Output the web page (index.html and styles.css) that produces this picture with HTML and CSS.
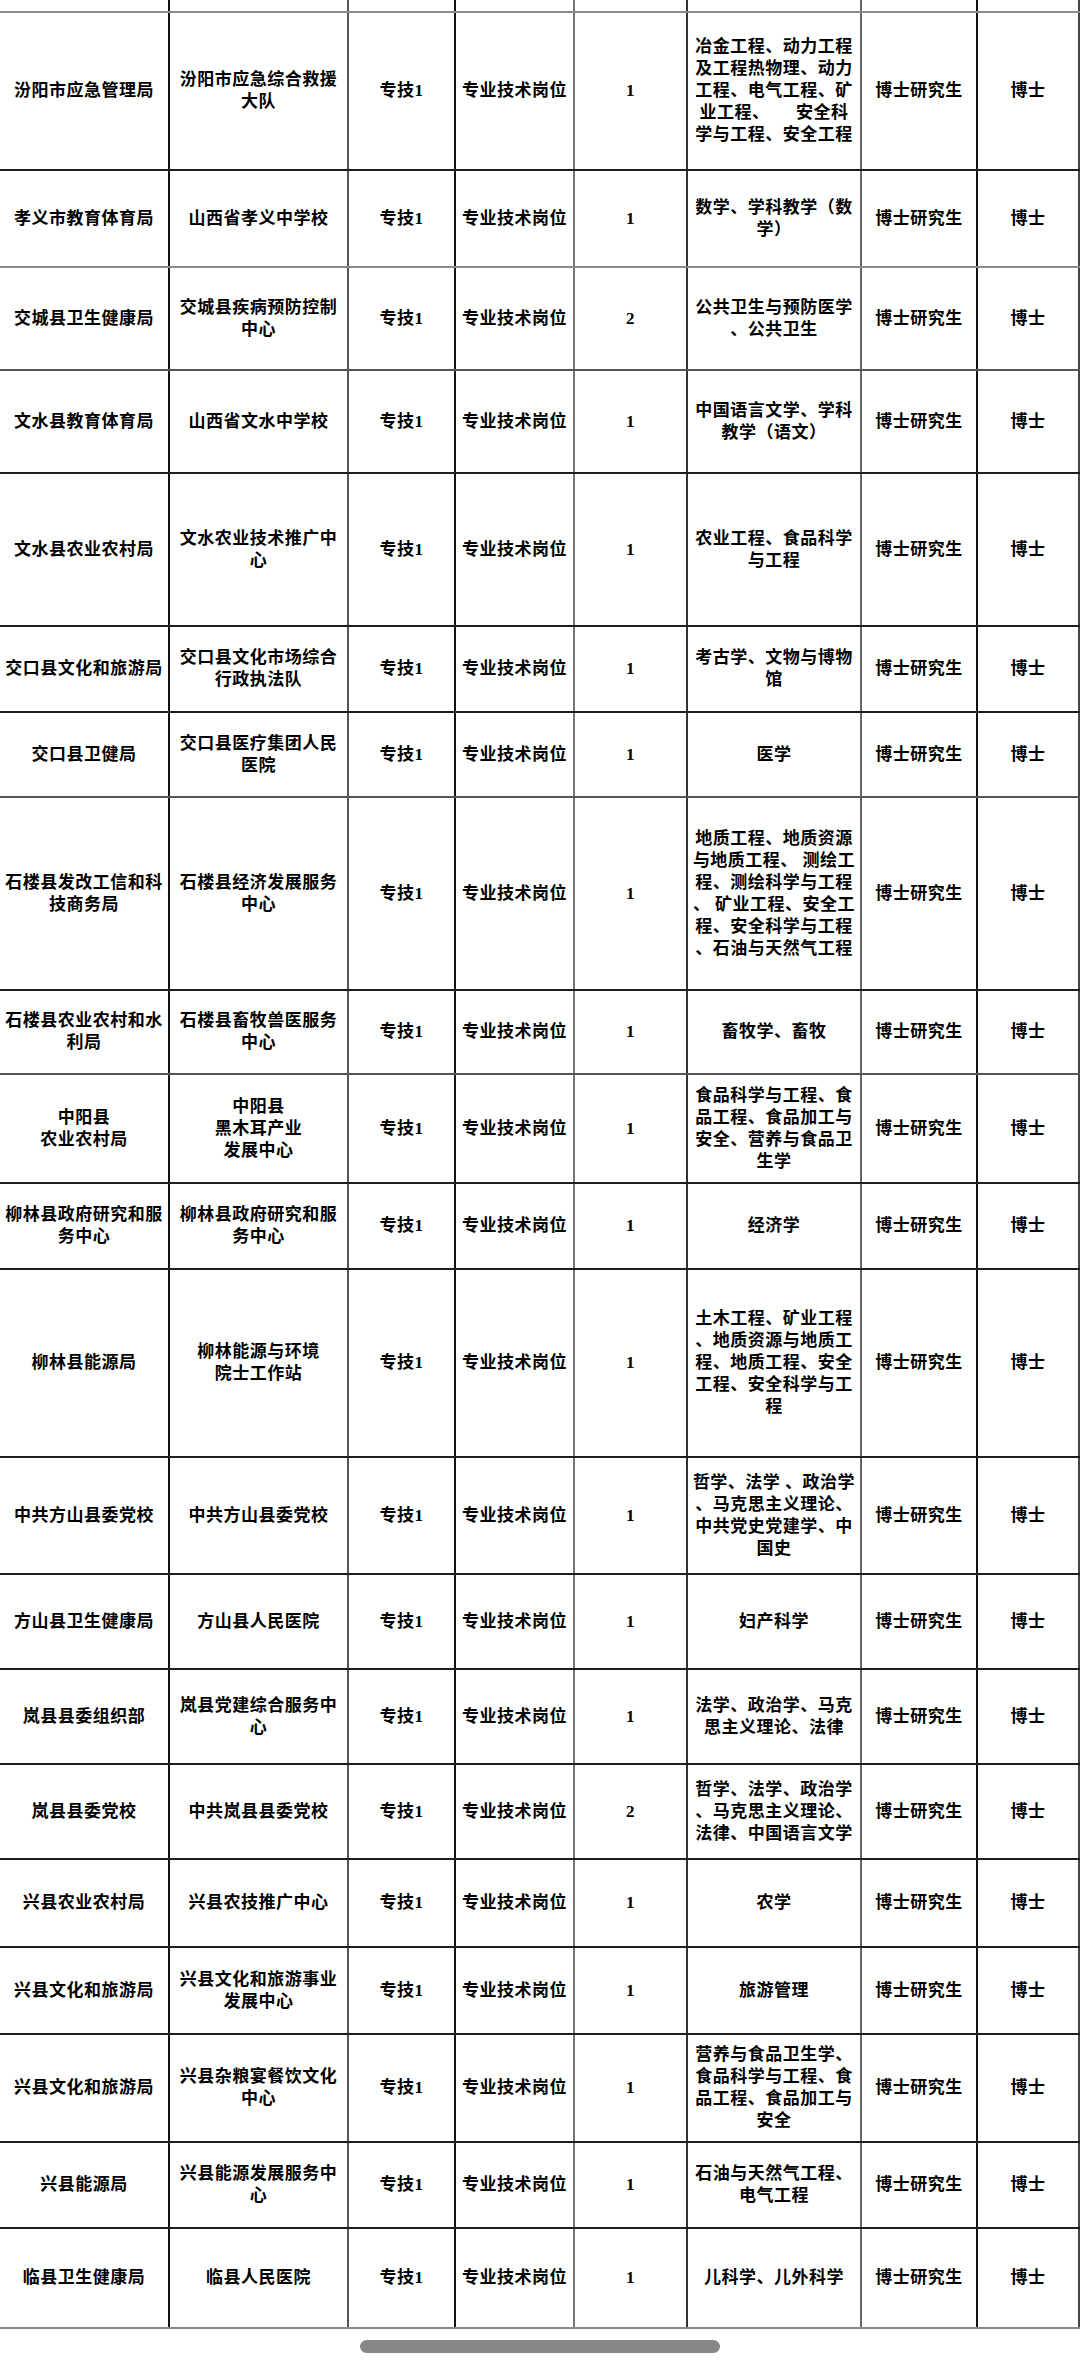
FILE: index.html
```html
<!DOCTYPE html>
<html lang="zh-CN">
<head>
<meta charset="utf-8">
<title>岗位表</title>
<link rel="stylesheet" href="styles.css">
</head>
<body>
<div class="sheet">
  <div class="row h13 soft">
    <div class="cell"></div><div class="cell"></div><div class="cell"></div><div class="cell"></div><div class="cell"></div><div class="cell"></div><div class="cell"></div><div class="cell"></div>
  </div>
  <div class="row h158">
    <div class="cell">汾阳市应急管理局</div><div class="cell">汾阳市应急综合救援<br>大队</div><div class="cell">专技1</div><div class="cell">专业技术岗位</div><div class="cell">1</div><div class="cell">冶金工程、动力工程<br>及工程热物理、动力<br>工程、电气工程、矿<br>业工程、　　安全科<br>学与工程、安全工程</div><div class="cell">博士研究生</div><div class="cell">博士</div>
  </div>
  <div class="row h97 soft">
    <div class="cell">孝义市教育体育局</div><div class="cell">山西省孝义中学校</div><div class="cell">专技1</div><div class="cell">专业技术岗位</div><div class="cell">1</div><div class="cell">数学、学科教学（数<br>学）</div><div class="cell">博士研究生</div><div class="cell">博士</div>
  </div>
  <div class="row h103 mid">
    <div class="cell">交城县卫生健康局</div><div class="cell">交城县疾病预防控制<br>中心</div><div class="cell">专技1</div><div class="cell">专业技术岗位</div><div class="cell">2</div><div class="cell">公共卫生与预防医学<br>、公共卫生</div><div class="cell">博士研究生</div><div class="cell">博士</div>
  </div>
  <div class="row h103">
    <div class="cell">文水县教育体育局</div><div class="cell">山西省文水中学校</div><div class="cell">专技1</div><div class="cell">专业技术岗位</div><div class="cell">1</div><div class="cell">中国语言文学、学科<br>教学（语文）</div><div class="cell">博士研究生</div><div class="cell">博士</div>
  </div>
  <div class="row h153">
    <div class="cell">文水县农业农村局</div><div class="cell">文水农业技术推广中<br>心</div><div class="cell">专技1</div><div class="cell">专业技术岗位</div><div class="cell">1</div><div class="cell">农业工程、食品科学<br>与工程</div><div class="cell">博士研究生</div><div class="cell">博士</div>
  </div>
  <div class="row h86">
    <div class="cell">交口县文化和旅游局</div><div class="cell">交口县文化市场综合<br>行政执法队</div><div class="cell">专技1</div><div class="cell">专业技术岗位</div><div class="cell">1</div><div class="cell">考古学、文物与博物<br>馆</div><div class="cell">博士研究生</div><div class="cell">博士</div>
  </div>
  <div class="row h85 mid">
    <div class="cell">交口县卫健局</div><div class="cell">交口县医疗集团人民<br>医院</div><div class="cell">专技1</div><div class="cell">专业技术岗位</div><div class="cell">1</div><div class="cell">医学</div><div class="cell">博士研究生</div><div class="cell">博士</div>
  </div>
  <div class="row h193">
    <div class="cell">石楼县发改工信和科<br>技商务局</div><div class="cell">石楼县经济发展服务<br>中心</div><div class="cell">专技1</div><div class="cell">专业技术岗位</div><div class="cell">1</div><div class="cell">地质工程、地质资源<br>与地质工程、 测绘工<br>程、测绘科学与工程<br>、 矿业工程、安全工<br>程、安全科学与工程<br>、石油与天然气工程</div><div class="cell">博士研究生</div><div class="cell">博士</div>
  </div>
  <div class="row h84 mid">
    <div class="cell">石楼县农业农村和水<br>利局</div><div class="cell">石楼县畜牧兽医服务<br>中心</div><div class="cell">专技1</div><div class="cell">专业技术岗位</div><div class="cell">1</div><div class="cell">畜牧学、畜牧</div><div class="cell">博士研究生</div><div class="cell">博士</div>
  </div>
  <div class="row h109">
    <div class="cell">中阳县<br>农业农村局</div><div class="cell">中阳县<br>黑木耳产业<br>发展中心</div><div class="cell">专技1</div><div class="cell">专业技术岗位</div><div class="cell">1</div><div class="cell">食品科学与工程、食<br>品工程、食品加工与<br>安全、营养与食品卫<br>生学</div><div class="cell">博士研究生</div><div class="cell">博士</div>
  </div>
  <div class="row h86">
    <div class="cell">柳林县政府研究和服<br>务中心</div><div class="cell">柳林县政府研究和服<br>务中心</div><div class="cell">专技1</div><div class="cell">专业技术岗位</div><div class="cell">1</div><div class="cell">经济学</div><div class="cell">博士研究生</div><div class="cell">博士</div>
  </div>
  <div class="row h188">
    <div class="cell">柳林县能源局</div><div class="cell">柳林能源与环境<br>院士工作站</div><div class="cell">专技1</div><div class="cell">专业技术岗位</div><div class="cell">1</div><div class="cell">土木工程、矿业工程<br>、地质资源与地质工<br>程、地质工程、安全<br>工程、安全科学与工<br>程</div><div class="cell">博士研究生</div><div class="cell">博士</div>
  </div>
  <div class="row h117">
    <div class="cell">中共方山县委党校</div><div class="cell">中共方山县委党校</div><div class="cell">专技1</div><div class="cell">专业技术岗位</div><div class="cell">1</div><div class="cell">哲学、法学 、政治学<br>、马克思主义理论、<br>中共党史党建学、中<br>国史</div><div class="cell">博士研究生</div><div class="cell">博士</div>
  </div>
  <div class="row h95">
    <div class="cell">方山县卫生健康局</div><div class="cell">方山县人民医院</div><div class="cell">专技1</div><div class="cell">专业技术岗位</div><div class="cell">1</div><div class="cell">妇产科学</div><div class="cell">博士研究生</div><div class="cell">博士</div>
  </div>
  <div class="row h95">
    <div class="cell">岚县县委组织部</div><div class="cell">岚县党建综合服务中<br>心</div><div class="cell">专技1</div><div class="cell">专业技术岗位</div><div class="cell">1</div><div class="cell">法学、政治学、马克<br>思主义理论、法律</div><div class="cell">博士研究生</div><div class="cell">博士</div>
  </div>
  <div class="row h95">
    <div class="cell">岚县县委党校</div><div class="cell">中共岚县县委党校</div><div class="cell">专技1</div><div class="cell">专业技术岗位</div><div class="cell">2</div><div class="cell">哲学、法学、政治学<br>、马克思主义理论、<br>法律、中国语言文学</div><div class="cell">博士研究生</div><div class="cell">博士</div>
  </div>
  <div class="row h88">
    <div class="cell">兴县农业农村局</div><div class="cell">兴县农技推广中心</div><div class="cell">专技1</div><div class="cell">专业技术岗位</div><div class="cell">1</div><div class="cell">农学</div><div class="cell">博士研究生</div><div class="cell">博士</div>
  </div>
  <div class="row h87">
    <div class="cell">兴县文化和旅游局</div><div class="cell">兴县文化和旅游事业<br>发展中心</div><div class="cell">专技1</div><div class="cell">专业技术岗位</div><div class="cell">1</div><div class="cell">旅游管理</div><div class="cell">博士研究生</div><div class="cell">博士</div>
  </div>
  <div class="row h108">
    <div class="cell">兴县文化和旅游局</div><div class="cell">兴县杂粮宴餐饮文化<br>中心</div><div class="cell">专技1</div><div class="cell">专业技术岗位</div><div class="cell">1</div><div class="cell">营养与食品卫生学、<br>食品科学与工程、食<br>品工程、食品加工与<br>安全</div><div class="cell">博士研究生</div><div class="cell">博士</div>
  </div>
  <div class="row h86">
    <div class="cell">兴县能源局</div><div class="cell">兴县能源发展服务中<br>心</div><div class="cell">专技1</div><div class="cell">专业技术岗位</div><div class="cell">1</div><div class="cell">石油与天然气工程、<br>电气工程</div><div class="cell">博士研究生</div><div class="cell">博士</div>
  </div>
  <div class="row h100 soft">
    <div class="cell">临县卫生健康局</div><div class="cell">临县人民医院</div><div class="cell">专技1</div><div class="cell">专业技术岗位</div><div class="cell">1</div><div class="cell">儿科学、儿外科学</div><div class="cell">博士研究生</div><div class="cell">博士</div>
  </div>
</div>
<div class="scroll-track"><div class="scroll-thumb"></div></div>
</body>
</html>
```

FILE: styles.css
```css
html, body {
  margin: 0;
  padding: 0;
  background: #ffffff;
}

body {
  width: 1080px;
  font-family: "Liberation Serif", "Noto Sans CJK SC", serif;
  font-weight: 700;
  font-size: 17px;
  color: #000000;
}

.sheet {
  width: 1080px;
}

.row {
  display: grid;
  grid-template-columns: 170px 179px 107px 119px 113px 174px 116px 102px;
  box-sizing: border-box;
  border-bottom: 2px solid #1e1e1e;
}

.row.soft {
  border-bottom-color: #8a8a8a;
}

.row.mid {
  border-bottom-color: #555555;
}

.cell {
  display: flex;
  align-items: center;
  justify-content: center;
  text-align: center;
  line-height: 22px;
  letter-spacing: 0.5px;
  white-space: nowrap;
  border-right: 2px solid #222222;
}

.cell:nth-child(1) { border-right-color: #111111; }
.cell:nth-child(2) { border-right-color: #555555; }
.cell:nth-child(3) { border-right-color: #111111; }
.cell:nth-child(4) { border-right-color: #777777; }
.cell:nth-child(5) { border-right-color: #333333; }
.cell:nth-child(6) { border-right-color: #666666; }
.cell:nth-child(7) { border-right-color: #111111; }
.cell:nth-child(8) { border-right-color: #444444; }

.h13 { height: 13px; }
.h84 { height: 84px; }
.h85 { height: 85px; }
.h86 { height: 86px; }
.h87 { height: 87px; }
.h88 { height: 88px; }
.h95 { height: 95px; }
.h97 { height: 97px; }
.h100 { height: 100px; }
.h103 { height: 103px; }
.h108 { height: 108px; }
.h109 { height: 109px; }
.h117 { height: 117px; }
.h153 { height: 153px; }
.h158 { height: 158px; }
.h188 { height: 188px; }
.h193 { height: 193px; }

.scroll-track {
  display: flex;
  justify-content: center;
  padding-top: 11px;
}

.scroll-thumb {
  width: 360px;
  height: 13px;
  border-radius: 7px;
  background: #878787;
}
```
